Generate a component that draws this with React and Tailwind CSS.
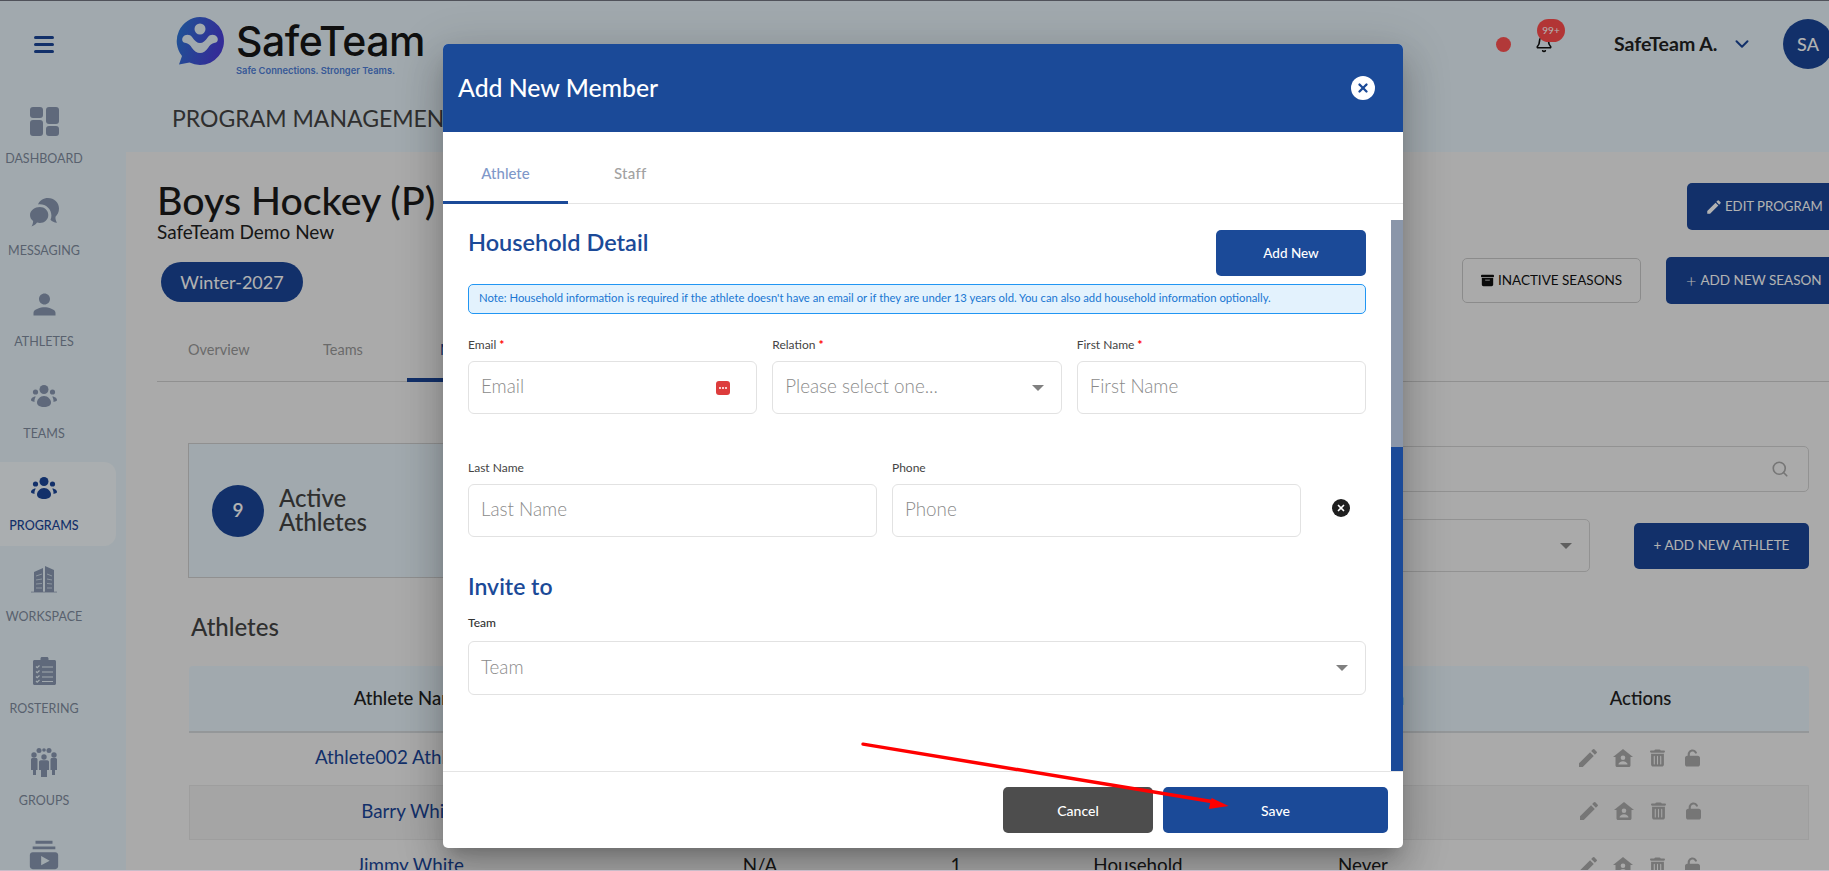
import { Bell, ChevronDown, Search, X } from 'lucide-react';
import { FaBoxArchive, FaUnlock, FaTrashCan } from 'react-icons/fa6';
import { MdEdit, MdPerson, MdSubscriptions } from 'react-icons/md';

const font = { fontFamily: 'Lato, "Open Sans", sans-serif' };

function DashIcon() {
  return (
    <svg viewBox="0 0 29 29" className="w-[29px] h-[29px]" fill="currentColor">
      <rect x="0" y="0" width="13" height="11" rx="3" />
      <rect x="0" y="13" width="13" height="16" rx="3" />
      <rect x="16" y="0" width="13" height="17" rx="3" />
      <rect x="16" y="19" width="13" height="10" rx="3" />
    </svg>
  );
}

function ChatIcon() {
  return (
    <svg viewBox="0 0 29 29" className="w-[29px] h-[29px]" fill="currentColor">
      <path d="M8 6.500C9.500 2.500 13.500 0 18 0c6 0 11 4.600 11 10.500 0 3.500-1.500 6.200-3.500 8.200-.2 2 .3 4 1.500 6-2.800-.2-5-1.300-6.500-3 .6-1.400.9-2.900.9-4.300C21.400 11 16 6.200 9.800 6.200c-.6 0-1.200.1-1.800.3z" />
      <path d="M9.800 9C14.500 9 18.300 12.500 18.300 17s-3.800 8-8.500 8c-1 0-1.900-.2-2.800-.4C5.600 26.600 3.600 28 1.500 28.500c1-1.500 1.600-3.200 1.600-5.400C1.200 21.600 0 19.500 0 17 0 12.500 5 9 9.800 9z" />
    </svg>
  );
}

function TeamIcon({ className }) {
  return (
    <svg viewBox="0 0 26 22" className={`w-[26px] h-[22px] ${className || ''}`} fill="currentColor">
      <circle cx="13" cy="4.500" r="4.500" />
      <circle cx="4.500" cy="7" r="2.600" />
      <circle cx="21.500" cy="7" r="2.600" />
      <path d="M13 11c4 0 7 3.500 7 6.500 0 3-3 4.500-7 4.500s-7-1.500-7-4.500C6 14.500 9 11 13 11z" />
      <path d="M4.800 11.500c-.9 1.500-1.500 3.500-1.300 5.500C1.500 16.500 0 16 0 15c0-1.800 2.300-3.500 4.800-3.500z" />
      <path d="M21.200 11.500c.9 1.500 1.500 3.500 1.300 5.500 2-.5 3.500-1 3.500-2 0-1.800-2.300-3.500-4.800-3.500z" />
    </svg>
  );
}

function BuildingIcon() {
  return (
    <svg viewBox="0 0 26 27" className="w-[26px] h-[27px]" fill="currentColor">
      <path d="M3 6 L12 2 V26 H3 Z" />
      <path d="M14 0 L23 4 V26 H14 Z" />
      <rect x="0" y="25.500" width="26" height="1.200" opacity="0.6" />
      <g stroke="#e7f3f9" strokeWidth="1" opacity="0.7">
        <path d="M5 10 L11 8 M5 14 L11 13 M5 18 L11 17.500 M5 22 L11 22" />
        <path d="M16 8 L21 10 M16 13 L21 14 M16 17.500 L21 18 M16 22 L21 22" />
      </g>
    </svg>
  );
}

function ClipIcon() {
  return (
    <svg viewBox="0 0 23 28" className="w-[23px] h-[28px]" fill="currentColor">
      <path d="M1.500 3H7.500V1.500C7.500.7 8.200 0 9 0h5c.8 0 1.500.7 1.500 1.500V3h6c.8 0 1.500.7 1.500 1.500V26.500c0 .8-.7 1.500-1.500 1.500h-20C.7 28 0 27.300 0 26.500V4.500C0 3.700.7 3 1.500 3z" />
      <g stroke="#e7f3f9" strokeWidth="1.200" fill="none">
        <path d="M3 9.500l1.200 1.200L6.500 8.500M3 14.500l1.200 1.200 2.300-2.200M3 19.500l1.200 1.200 2.300-2.200M3 24l1.200 1.200 2.300-2.200" />
        <path d="M9 10H20M9 15H20M9 20H20M9 24.500H20" />
      </g>
    </svg>
  );
}

function PeopleIcon() {
  return (
    <svg viewBox="0 0 26 29" className="w-[26px] h-[29px]" fill="currentColor">
      <circle cx="8" cy="2.500" r="2.500" />
      <circle cx="18" cy="2.500" r="2.500" />
      <circle cx="13" cy="2" r="1.800" />
      <circle cx="3" cy="7" r="2.700" />
      <circle cx="23" cy="7" r="2.700" />
      <circle cx="13" cy="9" r="2.700" />
      <path d="M0 11.500c0-1 .8-1.500 1.500-1.500h3.500c.8 0 1.500.6 1.500 1.500V22H5v5H2v-5H0z" />
      <path d="M26 11.500c0-1-.8-1.500-1.500-1.500H21c-.8 0-1.500.6-1.500 1.500V22H21v5h3v-5h2z" />
      <path d="M8 14c0-1 .8-1.800 1.800-1.800h6.400c1 0 1.800.8 1.800 1.800v8h-2v7h-6v-7H8z" />
    </svg>
  );
}

function HouseIcon({ className }) {
  return (
    <svg viewBox="0 0 20 18" className={className} fill="currentColor">
      <path fillRule="evenodd" d="M10 0 20 8h-2.500v8.500c0 .8-.7 1.500-1.500 1.500H4c-.8 0-1.500-.7-1.500-1.500V8H0zM10 6.500a2.300 2.300 0 1 0 0 4.600 2.300 2.300 0 0 0 0-4.600zM5.500 15.500h9c0-2-2.500-3.300-4.500-3.300s-4.500 1.300-4.500 3.300z" />
    </svg>
  );
}

const navItems = [
  { label: 'DASHBOARD', icon: <DashIcon /> },
  { label: 'MESSAGING', icon: <ChatIcon /> },
  { label: 'ATHLETES', icon: <MdPerson className="w-[33px] h-[33px]" /> },
  { label: 'TEAMS', icon: <TeamIcon /> },
  { label: 'PROGRAMS', icon: <TeamIcon className="text-[#1b4698]" />, active: true },
  { label: 'WORKSPACE', icon: <BuildingIcon /> },
  { label: 'ROSTERING', icon: <ClipIcon /> },
  { label: 'GROUPS', icon: <PeopleIcon /> },
  { icon: <MdSubscriptions className="w-[34px] h-[34px]" /> },
];

const rows = [
  { name: 'Athlete002 Athlete002', h: 'h-[52px]' },
  { name: 'Barry White', band: true, h: 'h-[55px]' },
  { name: 'Jimmy White', h: 'h-[54px]', guard: 'N/A', count: '1', type: 'Household', last: 'Never' },
];

function Sidebar() {
  return (
    <aside className="w-[126px] shrink-0 bg-[#e7f3f9] pt-[27px] flex flex-col">
      <div className="w-[88px] h-[32px] shrink-0 flex flex-col items-center justify-center gap-[4px] mb-[35px]">
        <span className="w-[20px] h-[3px] rounded bg-[#1b4698]" />
        <span className="w-[20px] h-[3px] rounded bg-[#1b4698]" />
        <span className="w-[20px] h-[3px] rounded bg-[#1b4698]" />
      </div>
      <nav className="flex flex-col shrink-0">
        {navItems.map((item, i) => (
          <div
            key={i}
            className={`h-[84px] mb-[7.700px] w-[116px] shrink-0 rounded-r-[12px] text-[#8897b1] ${item.active ? 'bg-[#f4fafd]' : ''}`}
          >
            <div className="w-[88px] flex flex-col items-center">
              <div className="h-[52px] flex items-center justify-center">{item.icon}</div>
              {item.label && (
                <span className={`text-[12.500px] leading-[18px] mt-[3px] ${item.active ? 'text-[#1b4698] font-medium' : 'text-[#7f8b9e]'}`}>
                  {item.label}
                </span>
              )}
            </div>
          </div>
        ))}
      </nav>
    </aside>
  );
}

function Logo() {
  return (
    <div className="flex items-start">
      <svg viewBox="0 0 48 50" className="w-[48px] h-[50px] mt-[16px]">
        <defs>
          <linearGradient id="lg" x1="0" y1="0" x2="1" y2="0.300">
            <stop offset="0" stopColor="#2b7bd6" />
            <stop offset="1" stopColor="#4a3fd8" />
          </linearGradient>
        </defs>
        <path d="M24 0a24 24 0 1 1-10.500 45.600L3 47.500l3-8.500A24 24 0 0 1 24 0z" fill="url(#lg)" />
        <circle cx="24" cy="12" r="5.500" fill="#e7f3f9" />
        <path d="M7 20c2-3 7-3 9 0 3 4 5 6 8 6s5-2 8-6c2-3 7-3 9 0 2 3 0 6-3 6-3 1-4 2-6 5-2 3-5 5-8 5s-6-2-8-5c-2-3-3-4-6-5-3 0-5-3-3-6z" fill="#e7f3f9" />
      </svg>
      <div className="ml-[12px] mt-[16px]">
        <div className="text-[41px] leading-[48px] font-medium text-[#161616] tracking-[-0.5px]" style={{ fontFamily: 'Inter, sans-serif' }}>SafeTeam</div>
        <div className="text-[9.300px] leading-[12px] font-semibold text-[#5080d8]" style={{ fontFamily: 'Inter, sans-serif' }}>Safe Connections. Stronger Teams.</div>
      </div>
    </div>
  );
}

function TopBar() {
  return (
    <header className="h-[151px] bg-[#e7f3f9] relative shrink-0 pl-[50px] flex flex-col">
      <div className="flex items-start">
        <Logo />
        <div className="ml-auto flex items-center pt-[18px]">
          <span className="w-[15px] h-[15px] rounded-full bg-[#ff5252]" />
          <div className="relative ml-[24px] mr-[61px]">
            <Bell className="w-[18px] h-[18px] text-[#111]" strokeWidth={2.200} />
            <span className="absolute left-[2px] top-[-16px] w-[28px] h-[23px] rounded-full bg-[#ff4d4d] text-white text-[10px] flex items-center justify-center">99+</span>
          </div>
          <span className="text-[19.500px] font-bold text-[#222] w-[117px]">SafeTeam A.</span>
          <ChevronDown className="w-[22px] h-[22px] text-[#1b4698] mr-[30px]" strokeWidth={2.200} />
          <span className="w-[50px] h-[50px] rounded-full bg-[#1b4698] text-white text-[18px] font-medium flex items-center justify-center mr-[-4px]">SA</span>
        </div>
      </div>
      <div className="text-[23px] text-[#444] absolute left-[46px] top-[100px] whitespace-nowrap">PROGRAM MANAGEMENT</div>
    </header>
  );
}

function BlueBtn({ className, children }) {
  return (
    <div className={`bg-[#1b4698] text-white text-[13.500px] rounded-[5px] flex items-center whitespace-nowrap ${className}`}>
      {children}
    </div>
  );
}

function Main() {
  return (
    <main className="flex-1 bg-[#f4f4f4] pl-[31px] pr-[20px] pt-[25px] min-w-0">
      <div className="flex">
        <div>
          <h1 className="text-[39.300px] leading-[46px] font-medium text-[#1a1a1a] whitespace-nowrap">Boys Hockey (P)</h1>
          <p className="text-[19px] leading-[22px] text-[#222] -mt-[2px]">SafeTeam Demo New</p>
          <div className="w-[142px] h-[40px] ml-[4px] mt-[19px] rounded-full bg-[#1b4698] text-white text-[18px] flex items-center justify-center">Winter-2027</div>
        </div>
        <div className="ml-auto flex flex-col items-end relative mr-[-40px] pt-[6px]">
          <BlueBtn className="w-[162px] h-[47px] pl-[18px] gap-[2px] !text-[13.200px]"><MdEdit className="w-[18px] h-[18px]" />EDIT PROGRAM</BlueBtn>
          <div className="flex items-center gap-[25px] mt-[27px]">
            <div className="w-[179px] h-[45px] rounded-[5px] border border-[#c8c8c8] text-[#111] text-[13.500px] flex items-center justify-center gap-[4px]"><FaBoxArchive className="w-[13px] h-[13px]" />INACTIVE SEASONS</div>
            <BlueBtn className="w-[183px] h-[47px] pl-[20px] gap-[4px]"><span className="text-[18px] font-light">+</span>ADD NEW SEASON</BlueBtn>
          </div>
        </div>
      </div>

      <div className="flex border-b border-[#cfcfcf] h-[51px] mt-[27px] text-[14.500px] text-[#999] -mr-[20px]">
        <span className="w-[166px] pl-[31px] pt-[8px]">Overview</span>
        <span className="w-[84px] pt-[8px]">Teams</span>
        <span className="w-[120px] pl-[33px] pt-[8px] text-[#1b4698] border-b-[4px] border-[#1b4698] h-[51px] box-border">Members</span>
      </div>

      <div className="flex mt-[61px] pl-[31px]">
        <div className="w-[700px] h-[135px] bg-[#e7f3f9] border border-[#cfcfcf] flex items-center pl-[23px]">
          <span className="w-[52px] h-[52px] rounded-full bg-[#1b4698] text-white text-[19px] font-semibold flex items-center justify-center">9</span>
          <span className="ml-[15px] mb-[1px] text-[24px] leading-[24px] font-medium text-[#444]">Active<br />Athletes</span>
        </div>
        <div className="ml-auto w-[480px] relative">
          <div className="h-[46px] mt-[3px] rounded-[5px] border border-[#d2d2d2] flex items-center justify-end pr-[19px]">
            <Search className="w-[18px] h-[18px] text-[#aaa]" strokeWidth={2.200} />
          </div>
          <div className="flex mt-[27px] items-center">
            <div className="w-[261px] h-[53px] rounded-[5px] border border-[#d2d2d2] flex items-center justify-end pr-[17px]">
              <span className="w-0 h-0 border-l-[6px] border-r-[6px] border-t-[6px] border-l-transparent border-r-transparent border-t-[#888]" />
            </div>
            <BlueBtn className="w-[175px] h-[46px] ml-[44px] justify-center">+ ADD NEW ATHLETE</BlueBtn>
          </div>
        </div>
      </div>

      <h2 className="text-[24px] leading-[30px] font-medium text-[#444] mt-[34px] pl-[34px]">Athletes</h2>

      <div className="ml-[32px] mt-[24px] text-[#222]">
        <div className="h-[67px] bg-[#e7f3f9] border-b-2 border-[#d4d8dc] rounded-t-[4px] grid grid-cols-[442px_258px_134px_230px_220px_335px] items-center text-center text-[18.500px] font-medium">
          <span>Athlete Name</span><span /><span /><span /><span>Last Login</span><span>Actions</span>
        </div>
        {rows.map((r) => (
          <div
            key={r.name}
            className={`${r.h} pb-[3px] grid grid-cols-[442px_258px_134px_230px_220px_335px] items-center text-center text-[18.800px] ${r.band ? 'bg-[#ececec] border border-[#e2e2e2]' : ''}`}
          >
            <span className="text-[#1b4698]">{r.name}</span>
            <span>{r.guard}</span>
            <span>{r.count}</span>
            <span>{r.type}</span>
            <span>{r.last}</span>
            <span className="flex items-center text-[#aaa] pl-[103px]">
              <MdEdit className="w-[24px] h-[24px]" />
              <HouseIcon className="w-[20px] h-[18px] ml-[13px]" />
              <FaTrashCan className="w-[15px] h-[18px] ml-[17px]" />
              <FaUnlock className="w-[15px] h-[18px] ml-[20px]" />
            </span>
          </div>
        ))}
      </div>
    </main>
  );
}

function Label({ children, req }) {
  return (
    <label className="block h-[17px] mb-[8px] text-[12px] leading-[17px] text-[#444]">
      {children}
      {req && <span className="text-[#f00] font-bold ml-[3px]">*</span>}
    </label>
  );
}

function Field({ placeholder, children, h = 'h-[53px]' }) {
  return (
    <div className={`${h} rounded-[6px] border border-[#e2e2e2] flex items-center pl-[12px] pr-[17px] text-[18.800px] font-light text-[#8a8a8a]`}>
      <span className="flex-1 pb-[2px]">{placeholder}</span>
      {children}
    </div>
  );
}

function Caret() {
  return <span className="w-0 h-0 border-l-[6px] border-r-[6px] border-t-[6px] border-l-transparent border-r-transparent border-t-[#808080]" />;
}

function MemberModal() {
  return (
    <div className="w-[960px] h-[804px] bg-white rounded-[5px] flex flex-col overflow-hidden shadow-[0_11px_15px_-7px_rgba(0,0,0,0.2),0_24px_38px_3px_rgba(0,0,0,0.14),0_9px_46px_8px_rgba(0,0,0,0.12)]">
      <div className="h-[88px] shrink-0 bg-[#1b4a98] pl-[15px] pr-[28px] flex items-center justify-between">
        <h2 className="text-[24.800px] font-medium text-white">Add New Member</h2>
        <span className="w-[24px] h-[24px] rounded-full bg-white text-[#1b4a98] flex items-center justify-center"><X className="w-[14px] h-[14px]" strokeWidth={4} /></span>
      </div>

      <div className="h-[72px] shrink-0 border-b border-[#e4e4e4] flex text-[15px]">
        <span className="w-[125px] pt-[14px] flex items-center justify-center text-[#7f98c9] border-b-[3px] border-[#1b4a98] h-[72px] font-medium">Athlete</span>
        <span className="ml-[46px] pt-[11px] flex items-center text-[#a2a2a2] font-medium tracking-[0.3px]">Staff</span>
      </div>

      <div className="flex-1 flex min-h-0">
        <div className="flex-1 pl-[25px] pr-[25px] pt-[26px] min-w-0">
          <div className="flex justify-between items-start">
            <h3 className="text-[23.500px] leading-[30px] -mt-[3px] font-semibold text-[#1b4a98]">Household Detail</h3>
            <button className="w-[150px] h-[46px] bg-[#1b4a98] text-white text-[13.500px] font-medium rounded-[5px]">Add New</button>
          </div>
          <div className="h-[30px] mt-[8px] rounded-[5px] border border-[#2196f3] bg-[#e3f2fd] text-[#1976d2] text-[11.300px] flex items-center pl-[10px] pb-[1px] whitespace-nowrap">
            Note: Household information is required if the athlete doesn't have an email or if they are under 13 years old. You can also add household information optionally.
          </div>

          <div className="grid grid-cols-3 gap-[15px] mt-[22px]">
            <div>
              <Label req>Email</Label>
              <Field placeholder="Email">
                <span className="w-[14px] h-[14px] mr-[9px] rounded-[3px] bg-[#dd3c3c] flex items-center justify-center gap-[1px]">
                  <i className="w-[2px] h-[2px] rounded-full bg-white" />
                  <i className="w-[2px] h-[2px] rounded-full bg-white" />
                  <i className="w-[2px] h-[2px] rounded-full bg-white" />
                </span>
              </Field>
            </div>
            <div>
              <Label req>Relation</Label>
              <Field placeholder="Please select one..."><Caret /></Field>
            </div>
            <div>
              <Label req>First Name</Label>
              <Field placeholder="First Name" />
            </div>
          </div>

          <div className="flex mt-[45px]">
            <div className="w-[409px]">
              <Label>Last Name</Label>
              <Field placeholder="Last Name" />
            </div>
            <div className="w-[409px] ml-[15px]">
              <Label>Phone</Label>
              <Field placeholder="Phone" />
            </div>
            <div className="ml-[31px] mt-[19px] self-center w-[18px] h-[18px] rounded-full bg-[#1f1f1f] text-white flex items-center justify-center"><X className="w-[10px] h-[10px]" strokeWidth={4} /></div>
          </div>

          <h3 className="text-[23px] leading-[30px] font-semibold text-[#1b4a98] mt-[34px]">Invite to</h3>
          <div className="mt-[13px]">
            <label className="block h-[17px] mb-[10px] text-[12px] leading-[17px] font-medium text-[#333]">Team</label>
            <Field placeholder="Team" h="h-[54px]"><Caret /></Field>
          </div>
        </div>

        <div className="w-[12px] shrink-0 pt-[16px] flex flex-col">
          <div className="h-[227px] bg-[#8a96a9]" />
          <div className="flex-1 bg-[#1b4a98]" />
        </div>
      </div>

      <div className="h-[77px] shrink-0 border-t border-[#e4e4e4] flex items-start justify-end gap-[10px] pt-[15px] pr-[15px] text-white text-[14px] font-medium">
        <button className="w-[150px] h-[46px] rounded-[5px] bg-[#4d4d4d]">Cancel</button>
        <button className="w-[225px] h-[46px] rounded-[5px] bg-[#1b4a98]">Save</button>
      </div>
    </div>
  );
}

export default function App() {
  return (
    <div className="h-screen w-full overflow-hidden relative flex border-t border-[#50525a]" style={font}>
      <Sidebar />
      <div className="flex-1 min-w-0 flex flex-col">
        <TopBar />
        <Main />
      </div>

      {/* backdrop + dialog */}
      <div className="absolute inset-0 bg-black/30 pl-[443px] pt-[43px]">
        <MemberModal />
      </div>

      {/* red annotation arrow */}
      <svg className="absolute inset-0 w-full h-full pointer-events-none" viewBox="0 0 1829 871">
        <line x1="863" y1="744" x2="1215" y2="802" stroke="#ff0000" strokeWidth="3.500" strokeLinecap="round" />
        <polygon points="1212,798 1229,806 1209,809" fill="#ff0000" />
      </svg>
      <div className="absolute left-0 right-0 bottom-0 h-px bg-[#c9bcc9]" />
    </div>
  );
}
